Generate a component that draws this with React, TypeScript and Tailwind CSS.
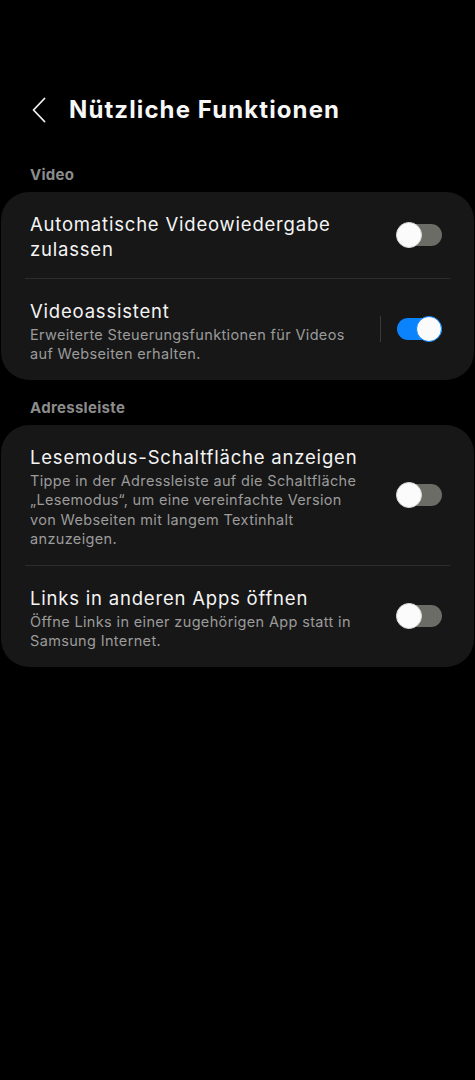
import React from 'react';

type Row = {
  title: React.ReactNode;
  sub?: React.ReactNode;
  on: boolean;
  sep?: boolean;
};

function Toggle({ on }: { on: boolean }) {
  return (
    <div className="relative w-[46px] h-[26px] mb-[4px] shrink-0">
      <div
        className={
          on
            ? 'absolute left-[1px] right-0 top-[2px] h-[22px] rounded-full bg-[#0b83fd]'
            : 'absolute left-[1px] right-0 top-[2px] h-[22px] rounded-full bg-[#6b6c65]'
        }
      />
      <div
        className={
          on
            ? 'absolute right-0 top-0 w-[26px] h-[26px] rounded-full bg-[#fbfbfb] border-[1.5px] border-[#0b83fd]'
            : 'absolute left-0 top-0 w-[26px] h-[26px] rounded-full bg-[#fbfbfb] border border-[#d8d8d8]'
        }
      />
    </div>
  );
}

function SettingRow({ title, sub, on, sep }: Row) {
  return (
    <div className={sep ? 'mx-6 border-t border-[#2d2d2d]' : 'mx-6'}>
      <div className="flex items-center -mx-6 pl-[29px] pr-[32px] pt-[20px] pb-[16px]">
        <div className="flex-1 min-w-0">
          <div className="text-[18.5px] leading-[25px] tracking-[0.8px] text-[#f4f4f4]">{title}</div>
          {sub && (
            <div className="mt-px text-[14.5px] leading-[19.5px] tracking-[0.35px] text-[#9b9b9b]">{sub}</div>
          )}
        </div>
        {on && <div className="w-px h-[26px] mb-[4px] bg-[#3a3a3a] mr-[15px]" />}
        <Toggle on={on} />
      </div>
    </div>
  );
}

function Section({ label, children }: { label: string; children: React.ReactNode }) {
  return (
    <div>
      <div className="px-[30px] text-[15px] leading-[20px] font-bold tracking-[0.3px] text-[#8c8c8c]">{label}</div>
      <div className="mt-[6.5px] mx-px rounded-[28px] bg-[#171717] overflow-hidden">{children}</div>
    </div>
  );
}

export default function App() {
  return (
    <div
      className="w-[475px] h-[1080px] overflow-hidden bg-black text-white pt-[94px]"
      style={{ fontFamily: 'Inter, "Noto Sans", sans-serif' }}
    >
      <div className="flex items-center h-[32px] pl-[31px]">
        <svg width="16" height="26" viewBox="0 0 16 26" fill="none">
          <path d="M13.5 1.5 2.5 13l11 11.5" stroke="#f2f2f2" strokeWidth="1.8" strokeLinecap="round" strokeLinejoin="round" />
        </svg>
        <h1 className="ml-[22px] text-[24px] leading-[32px] font-bold tracking-[1.1px] text-[#f7f7f7]">Nützliche Funktionen</h1>
      </div>

      <div className="mt-[39px]">
        <Section label="Video">
          <SettingRow title={<>Automatische Videowiedergabe<br />zulassen</>} on={false} />
          <SettingRow
            sep
            title="Videoassistent"
            sub={<>Erweiterte Steuerungsfunktionen für Videos<br />auf Webseiten erhalten.</>}
            on={true}
          />
        </Section>
      </div>

      <div className="mt-[18.5px]">
        <Section label="Adressleiste">
          <SettingRow
            title="Lesemodus-Schaltfläche anzeigen"
            sub={
              <>
                Tippe in der Adressleiste auf die Schaltfläche
                <br />
                „Lesemodus“, um eine vereinfachte Version
                <br />
                von Webseiten mit langem Textinhalt
                <br />
                anzuzeigen.
              </>
            }
            on={false}
          />
          <SettingRow
            sep
            title="Links in anderen Apps öffnen"
            sub={<>Öffne Links in einer zugehörigen App statt in<br />Samsung Internet.</>}
            on={false}
          />
        </Section>
      </div>
    </div>
  );
}
